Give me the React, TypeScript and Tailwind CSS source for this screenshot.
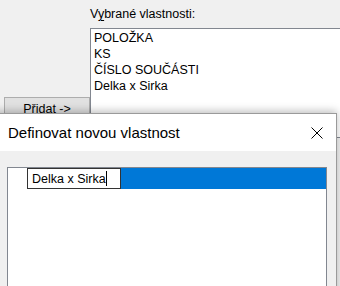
import React from 'react';

const items = ['POLOŽKA', 'KS', 'ČÍSLO SOUČÁSTI', 'Delka x Sirka'];

const App: React.FC = () => {
  return (
    <div className="relative w-[340px] h-[286px] overflow-hidden bg-[#f0f0f0] text-black font-['Liberation_Sans',Arial,sans-serif] text-[12.5px]">
      {/* window behind the dialog */}
      <div className="flex">
        <div className="w-[94px] pl-[4px] pt-[97px]">
          <button className="w-[86px] h-[24px] border border-[#adadad] bg-[#e1e1e1] text-[12.5px] leading-[16px]">
            Přidat -&gt;
          </button>
        </div>
        <div className="flex flex-col">
          <div className="pt-[6px] mb-[6px] leading-[16px]">
            V<span className="underline underline-offset-2">y</span>brané vlastnosti:
          </div>
          <div className="w-[260px] h-[110px] border border-[#828790] bg-white pl-[3px] pt-[1px]">
            {items.map(item => (
              <div key={item} className="leading-[16px]">{item}</div>
            ))}
          </div>
        </div>
      </div>

      {/* dialog */}
      <div className="absolute left-[-10px] top-[113px] w-[347px] h-[200px] flex flex-col border border-[#9a9a9a] shadow-[0_-2px_8px_rgba(0,0,0,0.25)]">
        <div className="h-[37px] bg-white flex items-center justify-between pl-[17px] pr-[13px]">
          <span className="text-[15px] leading-[20px] pt-[1px]">Definovat novou vlastnost</span>
          <svg width="12" height="12" viewBox="0 0 12 12" className="block">
            <path d="M0.5 0.5 L11.5 11.5 M11.5 0.5 L0.5 11.5" stroke="#000" strokeWidth="1" fill="none" />
          </svg>
        </div>
        <div className="flex-1 bg-[#f0f0f0] pt-[16px] pl-[16px] pr-[9px]">
          <div className="h-full border border-[#828790] bg-white pl-[19px]">
            <div className="flex h-[21px]">
              <div className="w-[94px] h-[21px] border border-[#333] bg-white pl-[4px] flex items-center leading-[16px]">
                <span>Delka x Sirka</span>
                <span className="inline-block w-[1px] h-[15px] bg-black" />
              </div>
              <div className="flex-1 bg-[#0078d7]" />
            </div>
          </div>
        </div>
      </div>
    </div>
  );
};

export default App;
